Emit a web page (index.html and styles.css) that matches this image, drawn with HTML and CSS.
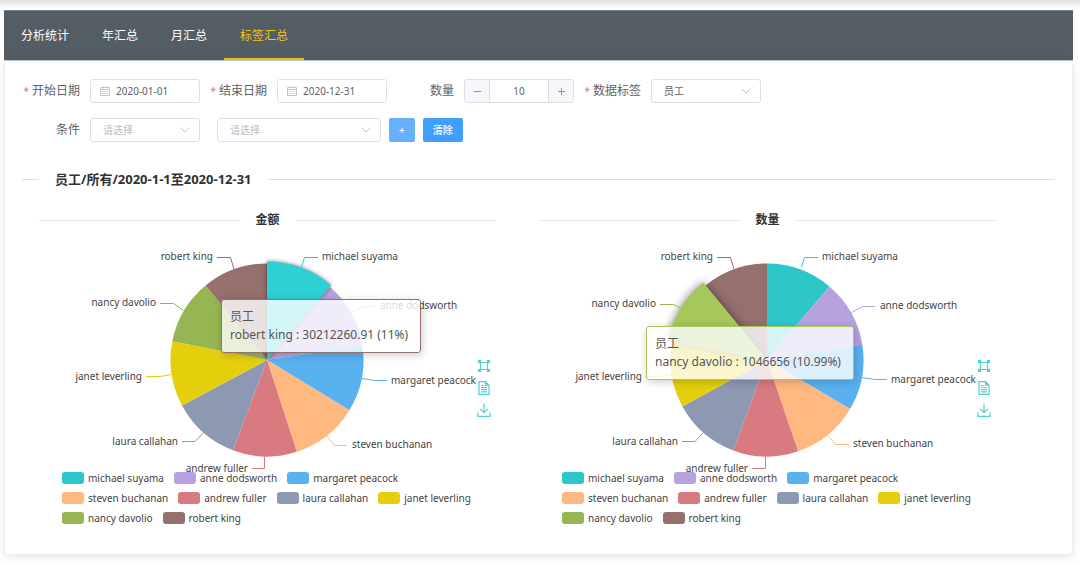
FILE: index.html
```html
<!DOCTYPE html>
<html lang="zh-CN">
<head>
<meta charset="utf-8">
<title>标签汇总</title>
<link rel="stylesheet" href="styles.css">
</head>
<body>
<svg class="defs" aria-hidden="true">
  <symbol id="calendar" viewBox="0 0 10 10"><path d="M.5 1.5h9v8h-9zM.5 3.5h9M3 .3v2M7 .3v2M2.3 5.5h1.2M4.4 5.5h1.2M6.5 5.5h1.2M2.3 7.5h1.2M4.4 7.5h1.2M6.5 7.5h1.2"/></symbol>
  <symbol id="chevron" viewBox="0 0 10 6"><path d="M.7.7 5 5 9.300.7"/></symbol>
  <symbol id="tool-brush" viewBox="0 0 14 14"><path d="M3 3.500h8M3 10.500h8M3.500 3v8M10.500 3v8"/><path fill="#4fd0d2" d="M1.500 1.500h2v2h-2zM10.500 1.500h2v2h-2zM1.500 10.500h2v2h-2zM10.500 10.500h2v2h-2z"/></symbol>
  <symbol id="tool-data" viewBox="0 0 14 14"><path d="M2 .7h6.500l3.500 3.500v9.100H2zM8.500.7v3.500H12M4 4.500h3M4 6.500h6M4 8.700h6M4 10.900h6"/></symbol>
  <symbol id="tool-save" viewBox="0 0 14 14"><path d="M7 .5v9M3.200 5.900 7 9.700l3.800-3.800M1 9.500v3.800h12V9.500"/></symbol>
</svg>
<main class="page">
  <nav class="tabs">
    <a class="tab" href="#stats">分析统计</a>
    <a class="tab" href="#year">年汇总</a>
    <a class="tab" href="#month">月汇总</a>
    <a class="tab tab-active" href="#tags" aria-current="page">标签汇总</a>
  </nav>
  <section class="panel">
    <form class="filters">
      <div class="row">
        <div class="field">
          <label class="label required" for="start">开始日期</label>
          <div class="control date"><svg class="icon calendar"><use href="#calendar"/></svg><input class="input" id="start" type="text" value="2020-01-01"></div>
        </div>
        <div class="field">
          <label class="label required" for="end">结束日期</label>
          <div class="control date"><svg class="icon calendar"><use href="#calendar"/></svg><input class="input" id="end" type="text" value="2020-12-31"></div>
        </div>
        <div class="field">
          <label class="label" for="count">数量</label>
          <div class="control stepper">
            <button class="step" type="button" aria-label="减少"><svg class="icon sign" viewBox="0 0 9 9"><path d="M1 4.500h7"/></svg></button>
            <input class="input count" id="count" type="text" value="10">
            <button class="step step-up" type="button" aria-label="增加"><svg class="icon sign" viewBox="0 0 9 9"><path d="M1 4.500h7M4.500 1v7"/></svg></button>
          </div>
        </div>
        <div class="field">
          <label class="label required" for="tag">数据标签</label>
          <div class="control pick"><select class="select" id="tag"><option>员工</option></select><svg class="icon chevron"><use href="#chevron"/></svg></div>
        </div>
      </div>
      <div class="row">
        <div class="field">
          <label class="label" for="cond">条件</label>
          <div class="control pick"><select class="select empty" id="cond"><option>请选择</option></select><svg class="icon chevron"><use href="#chevron"/></svg></div>
        </div>
        <div class="control pick wide"><select class="select empty" aria-label="条件值"><option>请选择</option></select><svg class="icon chevron"><use href="#chevron"/></svg></div>
        <button class="button button-add" type="button">+</button>
        <button class="button" type="button">清除</button>
      </div>
    </form>

    <h1 class="divider divider-left">员工/所有/2020-1-1至2020-12-31</h1>

    <div class="charts">
      <article class="chart">
        <h2 class="divider">金额</h2>
        <div class="plot">
          <svg class="pie" viewBox="-228 -128 457 236" role="img" aria-label="金额">
            <path class="c2" d="M0 0 62.8-73.3A96.500 96.500 0 0 1 95.400-14.400z"/>
            <path class="c3" d="M0 0 95.400-14.400A96.500 96.500 0 0 1 82.400 50.300z"/>
            <path class="c4" d="M0 0 82.400 50.300A96.500 96.500 0 0 1 29.800 91.800z"/>
            <path class="c5" d="M0 0 29.800 91.800A96.500 96.500 0 0 1-34 90.300z"/>
            <path class="c6" d="M0 0-34 90.300A96.500 96.500 0 0 1-85 45.600z"/>
            <path class="c7" d="M0 0-85 45.600A96.500 96.500 0 0 1-94.700-18.700z"/>
            <path class="c8" d="M0 0-94.700-18.700A96.500 96.500 0 0 1-61.400-74.500z"/>
            <path class="c9" d="M0 0-61.400-74.500A96.500 96.500 0 0 1 0-96.500z"/>
            <path class="hot1" d="M0 0V-98.500A98.500 98.500 0 0 1 64.100-74.800z"/>
            <g class="leads">
              <path class="s1" d="M34.500-93 37.500-102.500H51"/>
              <path class="s2" d="M84.500-47.500 95.500-53.500H108"/>
              <path class="s3" d="M95 18.500 107.500 20.500H120"/>
              <path class="s4" d="M60 76 67.500 85.500H80"/>
              <path class="s5" d="M-2.500 96.500V108.500H-15"/>
              <path class="s6" d="M-63.500 72.500-72 81.500H-85"/>
              <path class="s7" d="M-95.500 14.500-107 16.500H-121"/>
              <path class="s8" d="M-83.500-49.500-93.500-56.500H-107"/>
              <path class="s9" d="M-33-91-36.500-102.500H-50"/>
            </g>
            <g class="names">
              <text x="55" y="-100">michael suyama</text>
              <text x="113" y="-51">anne dodsworth</text>
              <text x="124" y="24">margaret peacock</text>
              <text x="85" y="88">steven buchanan</text>
            </g>
            <g class="names names-left">
              <text x="-19" y="112">andrew fuller</text>
              <text x="-89" y="85">laura callahan</text>
              <text x="-125" y="20">janet leverling</text>
              <text x="-111" y="-54">nancy davolio</text>
              <text x="-54" y="-100">robert king</text>
            </g>
          </svg>
          <div class="tools">
            <button class="tool" type="button" aria-label="区域缩放"><svg class="icon tool-icon"><use href="#tool-brush"/></svg></button>
            <button class="tool" type="button" aria-label="数据视图"><svg class="icon tool-icon"><use href="#tool-data"/></svg></button>
            <button class="tool" type="button" aria-label="保存为图片"><svg class="icon tool-icon"><use href="#tool-save"/></svg></button>
          </div>
          <div class="tooltip tooltip-amount">员工<br>robert king : 30212260.91 (11%)</div>
        </div>
        <ul class="legend">
          <li class="key"><i class="swatch b1"></i>michael suyama</li>
          <li class="key"><i class="swatch b2"></i>anne dodsworth</li>
          <li class="key"><i class="swatch b3"></i>margaret peacock</li>
          <li class="key"><i class="swatch b4"></i>steven buchanan</li>
          <li class="key"><i class="swatch b5"></i>andrew fuller</li>
          <li class="key"><i class="swatch b6"></i>laura callahan</li>
          <li class="key"><i class="swatch b7"></i>janet leverling</li>
          <li class="key"><i class="swatch b8"></i>nancy davolio</li>
          <li class="key"><i class="swatch b9"></i>robert king</li>
        </ul>
      </article>

      <article class="chart">
        <h2 class="divider">数量</h2>
        <div class="plot">
          <svg class="pie" viewBox="-228 -128 457 236" role="img" aria-label="数量">
            <path class="c1" d="M0 0V-96.500A96.500 96.500 0 0 1 62.400-73.600z"/>
            <path class="c2" d="M0 0 62.400-73.600A96.500 96.500 0 0 1 95.300-15.400z"/>
            <path class="c3" d="M0 0 95.300-15.400A96.500 96.500 0 0 1 83.100 49.100z"/>
            <path class="c4" d="M0 0 83.100 49.100A96.500 96.500 0 0 1 31.100 91.300z"/>
            <path class="c5" d="M0 0 31.100 91.300A96.500 96.500 0 0 1-33.800 90.400z"/>
            <path class="c6" d="M0 0-33.800 90.400A96.500 96.500 0 0 1-84.600 46.500z"/>
            <path class="c7" d="M0 0-84.600 46.500A96.500 96.500 0 0 1-94.700-18.700z"/>
            <path class="c9" d="M0 0-61.400-74.500A96.500 96.500 0 0 1 0-96.500z"/>
            <path class="hot8" d="M0 0-98.600-19.500A100.500 100.500 0 0 1-63.900-77.500z"/>
            <g class="leads">
              <path class="s1" d="M34.500-93 37.500-102.500H51"/>
              <path class="s2" d="M84.500-47.500 95.500-53.500H108"/>
              <path class="s3" d="M95 17.500 107.500 19.500H120"/>
              <path class="s4" d="M61 75.500 68.500 84.500H82"/>
              <path class="s5" d="M-1.500 96.500V108.500H-15"/>
              <path class="s6" d="M-63.500 72.500-72 81.500H-85"/>
              <path class="s7" d="M-95.500 14.500-107 16.500H-121"/>
              <path class="s8" d="M-87-52-93.500-55.500H-107"/>
              <path class="s9" d="M-33-91-36.500-102.500H-50"/>
            </g>
            <g class="names">
              <text x="55" y="-100">michael suyama</text>
              <text x="113" y="-51">anne dodsworth</text>
              <text x="124" y="23">margaret peacock</text>
              <text x="86" y="87">steven buchanan</text>
            </g>
            <g class="names names-left">
              <text x="-19" y="112">andrew fuller</text>
              <text x="-89" y="85">laura callahan</text>
              <text x="-125" y="20">janet leverling</text>
              <text x="-111" y="-53">nancy davolio</text>
              <text x="-54" y="-100">robert king</text>
            </g>
          </svg>
          <div class="tools">
            <button class="tool" type="button" aria-label="区域缩放"><svg class="icon tool-icon"><use href="#tool-brush"/></svg></button>
            <button class="tool" type="button" aria-label="数据视图"><svg class="icon tool-icon"><use href="#tool-data"/></svg></button>
            <button class="tool" type="button" aria-label="保存为图片"><svg class="icon tool-icon"><use href="#tool-save"/></svg></button>
          </div>
          <div class="tooltip tooltip-count">员工<br>nancy davolio : 1046656 (10.99%)</div>
        </div>
        <ul class="legend">
          <li class="key"><i class="swatch b1"></i>michael suyama</li>
          <li class="key"><i class="swatch b2"></i>anne dodsworth</li>
          <li class="key"><i class="swatch b3"></i>margaret peacock</li>
          <li class="key"><i class="swatch b4"></i>steven buchanan</li>
          <li class="key"><i class="swatch b5"></i>andrew fuller</li>
          <li class="key"><i class="swatch b6"></i>laura callahan</li>
          <li class="key"><i class="swatch b7"></i>janet leverling</li>
          <li class="key"><i class="swatch b8"></i>nancy davolio</li>
          <li class="key"><i class="swatch b9"></i>robert king</li>
        </ul>
      </article>
    </div>
  </section>
</main>
</body>
</html>
```
FILE: styles.css
```css
* { box-sizing: border-box; }
body {
  margin: 0;
  background: #fff;
  color: #606266;
  font: 12px/18px "Noto Sans", "Noto Sans CJK SC", sans-serif;
}
button, input, select { font: inherit; color: inherit; margin: 0; }
.defs { display: none; }
.icon { display: block; fill: none; stroke: #c0c4cc; stroke-width: 1; }

.page {
  padding: 10px 7px 9px 4px;
  background: linear-gradient(#e0e0e0, #fff 9px);
}

/* tab bar */
.tabs {
  display: flex;
  gap: 1px;
  height: 51px;
  padding-left: 1px;
  background: #545c64;
  border-top: 1px solid #7b8187;
  border-bottom: 1px solid #c4cad2;
}
.tab {
  padding: 0 16px;
  color: #fff;
  line-height: 49px;
  text-decoration: none;
}
.tab-active { color: #f5c916; box-shadow: inset 0 -2px #e6bd0b; }

.panel {
  padding-bottom: 30px;
  background: #fff;
  border: 1px solid #ebeef5;
  border-top: 0;
  border-radius: 0 0 4px 4px;
  box-shadow: 0 2px 9px rgba(0, 0, 0, .1);
}

/* filters */
.filters {
  display: grid;
  gap: 15px;
  padding: 18px 8px 0;
}
.row { display: flex; flex-wrap: wrap; }
.field { display: flex; }
.label {
  width: 77px;
  padding-right: 10px;
  line-height: 24px;
  text-align: right;
}
.required::before { content: "*"; margin-right: 3px; color: #f56c6c; font-size: 10px; }
.control {
  display: flex;
  align-items: center;
  width: 110px;
  height: 24px;
  border: 1px solid #dcdfe6;
  border-radius: 3px;
  background: #fff;
  font-size: 10px;
}
.input {
  flex: 1;
  min-width: 0;
  height: 22px;
  padding: 0;
  border: 0;
  background: none;
}
.date { gap: 6px; padding-left: 9px; }
.calendar { width: 10px; height: 10px; }
.stepper { overflow: hidden; }
.count { text-align: center; }
.step {
  display: grid;
  place-items: center;
  width: 25px;
  height: 22px;
  padding: 0;
  border: 0;
  border-right: 1px solid #dcdfe6;
  background: #f5f7fa;
}
.step-up { border-right: 0; border-left: 1px solid #dcdfe6; }
.sign { width: 9px; height: 9px; stroke: #909399; }
.pick { padding-right: 9px; }
.select {
  flex: 1;
  min-width: 0;
  height: 22px;
  padding: 0 0 0 12px;
  border: 0;
  background: none;
  appearance: none;
}
.empty { color: #b8bcc6; }
.chevron { width: 10px; height: 6px; }
.wide { width: 164px; margin-left: 17px; }
.button {
  height: 24px;
  margin-left: 8px;
  padding: 0 10px;
  border: 0;
  border-radius: 2px;
  background: #409eff;
  color: #fff;
  font-size: 10px;
  font-weight: 500;
}
.button-add { background: #66b1ff; }

/* headings set in a rule */
.divider {
  display: flex;
  align-items: center;
  gap: 16px;
  margin: 0;
  color: #303133;
  font-size: 12px;
  line-height: 18px;
}
.divider::before, .divider::after {
  content: "";
  flex: 1;
  height: 1px;
  background: #e4e7ed;
}
.divider-left { margin: 28px 17px 0; font-size: 13px; }
.divider-left::before { flex: 0 0 17px; }
.divider-left::before, .divider-left::after { background: #dcdfe6; }

/* charts */
.charts {
  display: grid;
  grid-template-columns: 1fr 1fr;
  gap: 43px;
  padding: 23px 76px 0 34px;
}
.plot { position: relative; margin-top: 3px; }
.pie { display: block; width: 100%; overflow: visible; }
.c1 { fill: #2ec7c9; }
.c2 { fill: #b6a2de; }
.c3 { fill: #5ab1ef; }
.c4 { fill: #ffb980; }
.c5 { fill: #d87a80; }
.c6 { fill: #8d98b3; }
.c7 { fill: #e5cf0d; }
.c8 { fill: #97b552; }
.c9 { fill: #95706d; }
.hot1 { fill: #2fd0d3; filter: drop-shadow(0 0 2px rgba(0, 0, 0, .5)); }
.hot8 { fill: #a6c75a; filter: drop-shadow(0 0 5px rgba(0, 0, 0, .5)); }
.leads { fill: none; stroke-width: 1; }
.s1 { stroke: #2ec7c9; }
.s2 { stroke: #b6a2de; }
.s3 { stroke: #5ab1ef; }
.s4 { stroke: #ffb980; }
.s5 { stroke: #d87a80; }
.s6 { stroke: #8d98b3; }
.s7 { stroke: #e5cf0d; }
.s8 { stroke: #97b552; }
.s9 { stroke: #95706d; }
.names { fill: #444; font-size: 10px; }
.names-left { text-anchor: end; }

.tools {
  position: absolute;
  top: 127px;
  right: 5px;
  display: grid;
  gap: 8px;
}
.tool { padding: 0; border: 0; background: none; }
.tool-icon { width: 14px; height: 14px; stroke: #4fd0d2; stroke-width: 1.2; }

.tooltip {
  position: absolute;
  padding: 8px 12px 8px 8px;
  border: 1px solid;
  border-radius: 3px;
  background: rgba(255, 255, 255, .8);
  box-shadow: 1px 2px 8px rgba(0, 0, 0, .2);
  color: #555;
  font-size: 12px;
  white-space: nowrap;
}
.tooltip-amount { top: 67px; left: 182px; border-color: #95706d; }
.tooltip-count { top: 94px; left: 107px; border-color: #a6c75a; }

.legend {
  display: flex;
  flex-wrap: wrap;
  gap: 8px 10px;
  margin: 4px 0 0;
  padding: 0 20px 0 23px;
  list-style: none;
  color: #444;
  font-size: 10px;
  line-height: 12px;
}
.key { display: flex; gap: 4px; }
.swatch { width: 22px; height: 12px; border-radius: 3px; }
.b1 { background: #2ec7c9; }
.b2 { background: #b6a2de; }
.b3 { background: #5ab1ef; }
.b4 { background: #ffb980; }
.b5 { background: #d87a80; }
.b6 { background: #8d98b3; }
.b7 { background: #e5cf0d; }
.b8 { background: #97b552; }
.b9 { background: #95706d; }
```
